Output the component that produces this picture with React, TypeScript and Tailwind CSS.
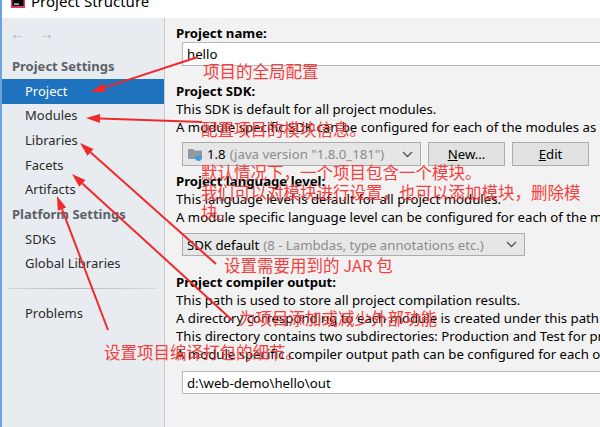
import React from "react";

const Arrow = (props: { x1: number; y1: number; x2: number; y2: number }) => {
  const { x1, y1, x2, y2 } = props;
  const dx = x2 - x1;
  const dy = y2 - y1;
  const len = Math.sqrt(dx * dx + dy * dy);
  const ux = dx / len;
  const uy = dy / len;
  const head = 14;
  const half = 4.5;
  const bx = x2 - ux * head;
  const by = y2 - uy * head;
  const pts = `${x2},${y2} ${bx - uy * half},${by + ux * half} ${bx + uy * half},${by - ux * half}`;
  return (
    <g>
      <line x1={x1} y1={y1} x2={bx} y2={by} stroke="#f02a2a" strokeWidth={2} />
      <polygon points={pts} fill="#f02a2a" />
    </g>
  );
};

const Chevron = () => (
  <svg width="11" height="7" viewBox="0 0 11 7">
    <path d="M1 1 L5.5 5.5 L10 1" fill="none" stroke="#555" strokeWidth="1.3" />
  </svg>
);

const sideItems = ["Modules", "Libraries", "Facets", "Artifacts"];

const Note = (props: { x: number; y: number; children: React.ReactNode }) => (
  <div
    className="absolute text-[16.5px] leading-[20px] text-[#f33f3f] font-['Noto_Sans_CJK_SC',sans-serif] whitespace-nowrap"
    style={{ left: props.x, top: props.y }}
  >
    {props.children}
  </div>
);

export default function App() {
  return (
    <div className="relative w-[600px] h-[427px] overflow-hidden flex flex-col bg-white border-l-2 border-[#6aa3dc] font-['Noto_Sans','Open_Sans',sans-serif]">
      {/* title bar */}
      <div className="h-[18px] flex items-end shrink-0 bg-white">
        <svg width="14" height="9" viewBox="0 0 14 9" className="ml-[9px] mb-[10px]">
          <rect x="0" y="-6" width="14" height="15" fill="#e2336b" />
          <rect x="1.5" y="-6" width="11" height="13" fill="#000" />
          <rect x="3" y="4.5" width="5" height="1.2" fill="#fff" />
        </svg>
        <span className="ml-[6px] mb-[9px] text-[15px] leading-[15px] text-black">Project Structure</span>
      </div>

      <div className="flex flex-1 min-h-0">
        {/* sidebar */}
        <div className="w-[163px] shrink-0 bg-[#e8ecf1] border-r border-[#c6c9cd] text-[13px] text-[#2b2b2b]">
          <div className="h-[36.3px] flex items-start pt-[9px] pl-[8px] gap-[14px] text-[#a9b0b8] text-[15px] leading-[12px]">
            <span>←</span>
            <span>→</span>
          </div>
          <div className="h-[24.7px] flex items-center pl-[10px] font-bold text-[#5b6168]">Project Settings</div>
          <div className="h-[24.7px] flex items-center pl-[23px] bg-[#1e72be] text-white">Project</div>
          {sideItems.map((item) => (
            <div key={item} className="h-[24.7px] flex items-center pl-[23px]">
              {item}
            </div>
          ))}
          <div className="h-[24.7px] flex items-center pl-[10px] font-bold text-[#5b6168]">Platform Settings</div>
          <div className="h-[24.7px] flex items-center pl-[23px]">SDKs</div>
          <div className="h-[24.7px] flex items-center pl-[23px]">Global Libraries</div>
          <div className="h-[24.7px] flex items-center px-[7px]">
            <div className="h-px w-full bg-gradient-to-r from-[#d0d3d6] via-[#b9bcbf] to-[#d8dbde]" />
          </div>
          <div className="h-[24.7px] flex items-center pl-[23px]">Problems</div>
        </div>

        {/* main panel */}
        <div className="flex-1 min-w-0 overflow-hidden bg-[#f2f2f2] pl-[11px] pt-[6px] text-[13.2px] leading-[18px] text-black whitespace-nowrap">
          <div className="font-bold">Project name:</div>
          <div className="ml-[6px] w-[440px] h-[24px] bg-white border border-[#b9b9b9] flex items-center pl-[4px]">hello</div>

          <div className="mt-[16px] font-bold">Project SDK:</div>
          <div>This SDK is default for all project modules.</div>
          <div>A module specific SDK can be configured for each of the modules as required.</div>

          <div className="mt-[6px] ml-[6px] flex gap-[7px]">
            <div className="w-[239px] h-[24px] bg-[#e6e6e6] border border-[#adadad] flex items-center pl-[4px] pr-[7px]">
              <svg width="17" height="15" viewBox="0 0 17 15" className="mr-[3px]">
                <path d="M1 2 H6 L7.5 3.5 H15 V12 H1 Z" fill="#8f9aa5" />
                <path d="M8 9 H15 Q15 14 11.5 14 Q8 14 8 9 Z" fill="#3d9be0" />
              </svg>
              <span>1.8</span>
              <span className="ml-[4px] text-[#8c8c8c]">(java version "1.8.0_181")</span>
              <span className="ml-auto flex items-center"><Chevron /></span>
            </div>
            <div className="w-[77px] h-[24px] bg-[#e1e1e1] border border-[#adadad] flex items-center justify-center">
              <span><span className="underline">N</span>ew...</span>
            </div>
            <div className="w-[77px] h-[24px] bg-[#e1e1e1] border border-[#adadad] flex items-center justify-center">
              <span><span className="underline">E</span>dit</span>
            </div>
          </div>

          <div className="mt-[6px] font-bold">Project language level:</div>
          <div>This language level is default for all project modules.</div>
          <div>A module specific language level can be configured for each of the modules as required.</div>

          <div className="mt-[7px] ml-[6px] w-[343px] h-[23px] bg-[#e6e6e6] border border-[#adadad] flex items-center pl-[4px] pr-[7px]">
            <span>SDK default</span>
            <span className="ml-[4px] text-[#8c8c8c]">(8 - Lambdas, type annotations etc.)</span>
            <span className="ml-auto flex items-center"><Chevron /></span>
          </div>

          <div className="mt-[17px] font-bold">Project compiler output:</div>
          <div>This path is used to store all project compilation results.</div>
          <div>A directory corresponding to each module is created under this path.</div>
          <div>This directory contains two subdirectories: Production and Test for production code and test sources.</div>
          <div>A module specific compiler output path can be configured for each of the modules as required.</div>
          <div className="mt-[8px] ml-[6px] w-[440px] h-[23px] bg-white border border-[#b9b9b9] flex items-center pl-[4px]">
            d:\web-demo\hello\out
          </div>
        </div>
      </div>

      {/* annotations */}
      <svg className="absolute inset-0 pointer-events-none" width="600" height="427">
        <Arrow x1={196} y1={57} x2={89} y2={92} />
        <Arrow x1={200} y1={122} x2={84} y2={118} />
        <Arrow x1={214} y1={264} x2={78} y2={143} />
        <Arrow x1={230} y1={320} x2={70} y2={174} />
        <Arrow x1={106} y1={330} x2={55} y2={196} />
      </svg>
      <Note x={201} y={61}>项目的全局配置</Note>
      <Note x={199} y={119}>配置项目的模块信息。</Note>
      <Note x={199} y={162}>
        默认情况下，一个项目包含一个模块。
        <br />
        我们可以对模块进行设置，也可以添加模块，删除模
        <br />
        块。
      </Note>
      <Note x={222} y={255}>设置需要用到的 JAR 包</Note>
      <Note x={237} y={308}>为项目添加或减少外部功能</Note>
      <Note x={102} y={342}>设置项目编译打包的细节。</Note>
    </div>
  );
}
